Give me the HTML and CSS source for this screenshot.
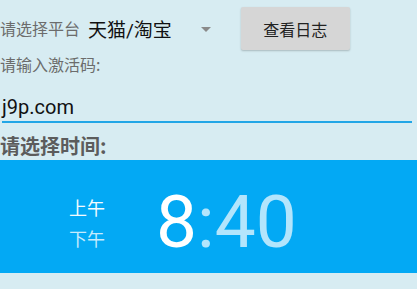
FILE: index.html
```html
<!DOCTYPE html>
<html lang="zh">
<head>
<meta charset="utf-8">
<link rel="stylesheet" href="styles.css">
</head>
<body>
<div class="page">
  <div class="row-platform">
    <span class="label-platform">请选择平台</span>
    <span class="spinner-value">天猫/淘宝</span>
    <span class="spinner-arrow"></span>
    <button class="btn-log">查看日志</button>
  </div>
  <div class="label-code">请输入激活码:</div>
  <div class="input-code">j9p.com</div>
  <div class="label-time">请选择时间:</div>
  <div class="time-header">
    <div class="ampm">
      <span class="ampm-item is-active">上午</span>
      <span class="ampm-item">下午</span>
    </div>
    <div class="clock"><span class="hour">8</span><span class="rest">:40</span></div>
  </div>
</div>
</body>
</html>
```

FILE: styles.css
```css
html, body {
  margin: 0;
  padding: 0;
  background: #d7ecf2;
}
body {
  width: 417px;
  height: 289px;
  overflow: hidden;
  font-family: Roboto, "Noto Sans CJK SC", sans-serif;
}
.page {
  display: flex;
  flex-direction: column;
}
.row-platform {
  display: flex;
  align-items: center;
  height: 56px;
}
.label-platform {
  font-family: "Noto Sans CJK SC", sans-serif;
  font-size: 16px;
  color: #6c6c6c;
  margin-left: 0;
}
.spinner-value {
  font-family: Roboto, "Noto Sans CJK SC", sans-serif;
  font-size: 19px;
  color: #111;
  margin-left: 8px;
}
.spinner-arrow {
  width: 0;
  height: 0;
  border-left: 5px solid transparent;
  border-right: 5px solid transparent;
  border-top: 5px solid #8a8a8a;
  margin-left: 29px;
  margin-top: 2px;
}
.btn-log {
  margin-left: 30px;
  width: 109px;
  height: 43px;
  margin-top: 1px;
  border: none;
  border-radius: 2px;
  background: #d6d6d6;
  box-shadow: 0 1px 2px rgba(0, 0, 0, 0.22);
  font-family: "Noto Sans CJK SC", sans-serif;
  font-size: 16px;
  color: #222;
  padding: 0;
}
.label-code {
  font-family: "Noto Sans CJK SC", sans-serif;
  font-size: 16px;
  line-height: 16px;
  color: #6c6c6c;
  margin-left: 0;
}
.input-code {
  margin-top: 23px;
  margin-left: 2px;
  margin-right: 5px;
  font-size: 20px;
  line-height: 24px;
  color: #111;
  padding-bottom: 2px;
  border-bottom: 2px solid #22a6e6;
}
.label-time {
  margin-top: 11px;
  font-family: "Noto Sans CJK SC", sans-serif;
  font-weight: bold;
  font-size: 20px;
  line-height: 24px;
  color: #5c5c5c;
  margin-left: 0;
}
.time-header {
  margin-top: 2px;
  height: 113px;
  background: #03a9f4;
  display: flex;
  align-items: center;
  padding-left: 69px;
  padding-top: 12px;
  box-sizing: border-box;
}
.ampm {
  display: flex;
  flex-direction: column;
}
.ampm-item {
  font-family: "Noto Sans CJK SC", sans-serif;
  font-size: 18px;
  line-height: 31px;
  color: #c6ebfd;
}
.ampm-item.is-active {
  color: #f4fbff;
}
.clock {
  margin-left: 51px;
  font-family: Roboto, sans-serif;
  font-size: 73px;
  line-height: 73px;
}
.hour {
  color: #ffffff;
}
.rest {
  color: #b3e5fc;
}
```
